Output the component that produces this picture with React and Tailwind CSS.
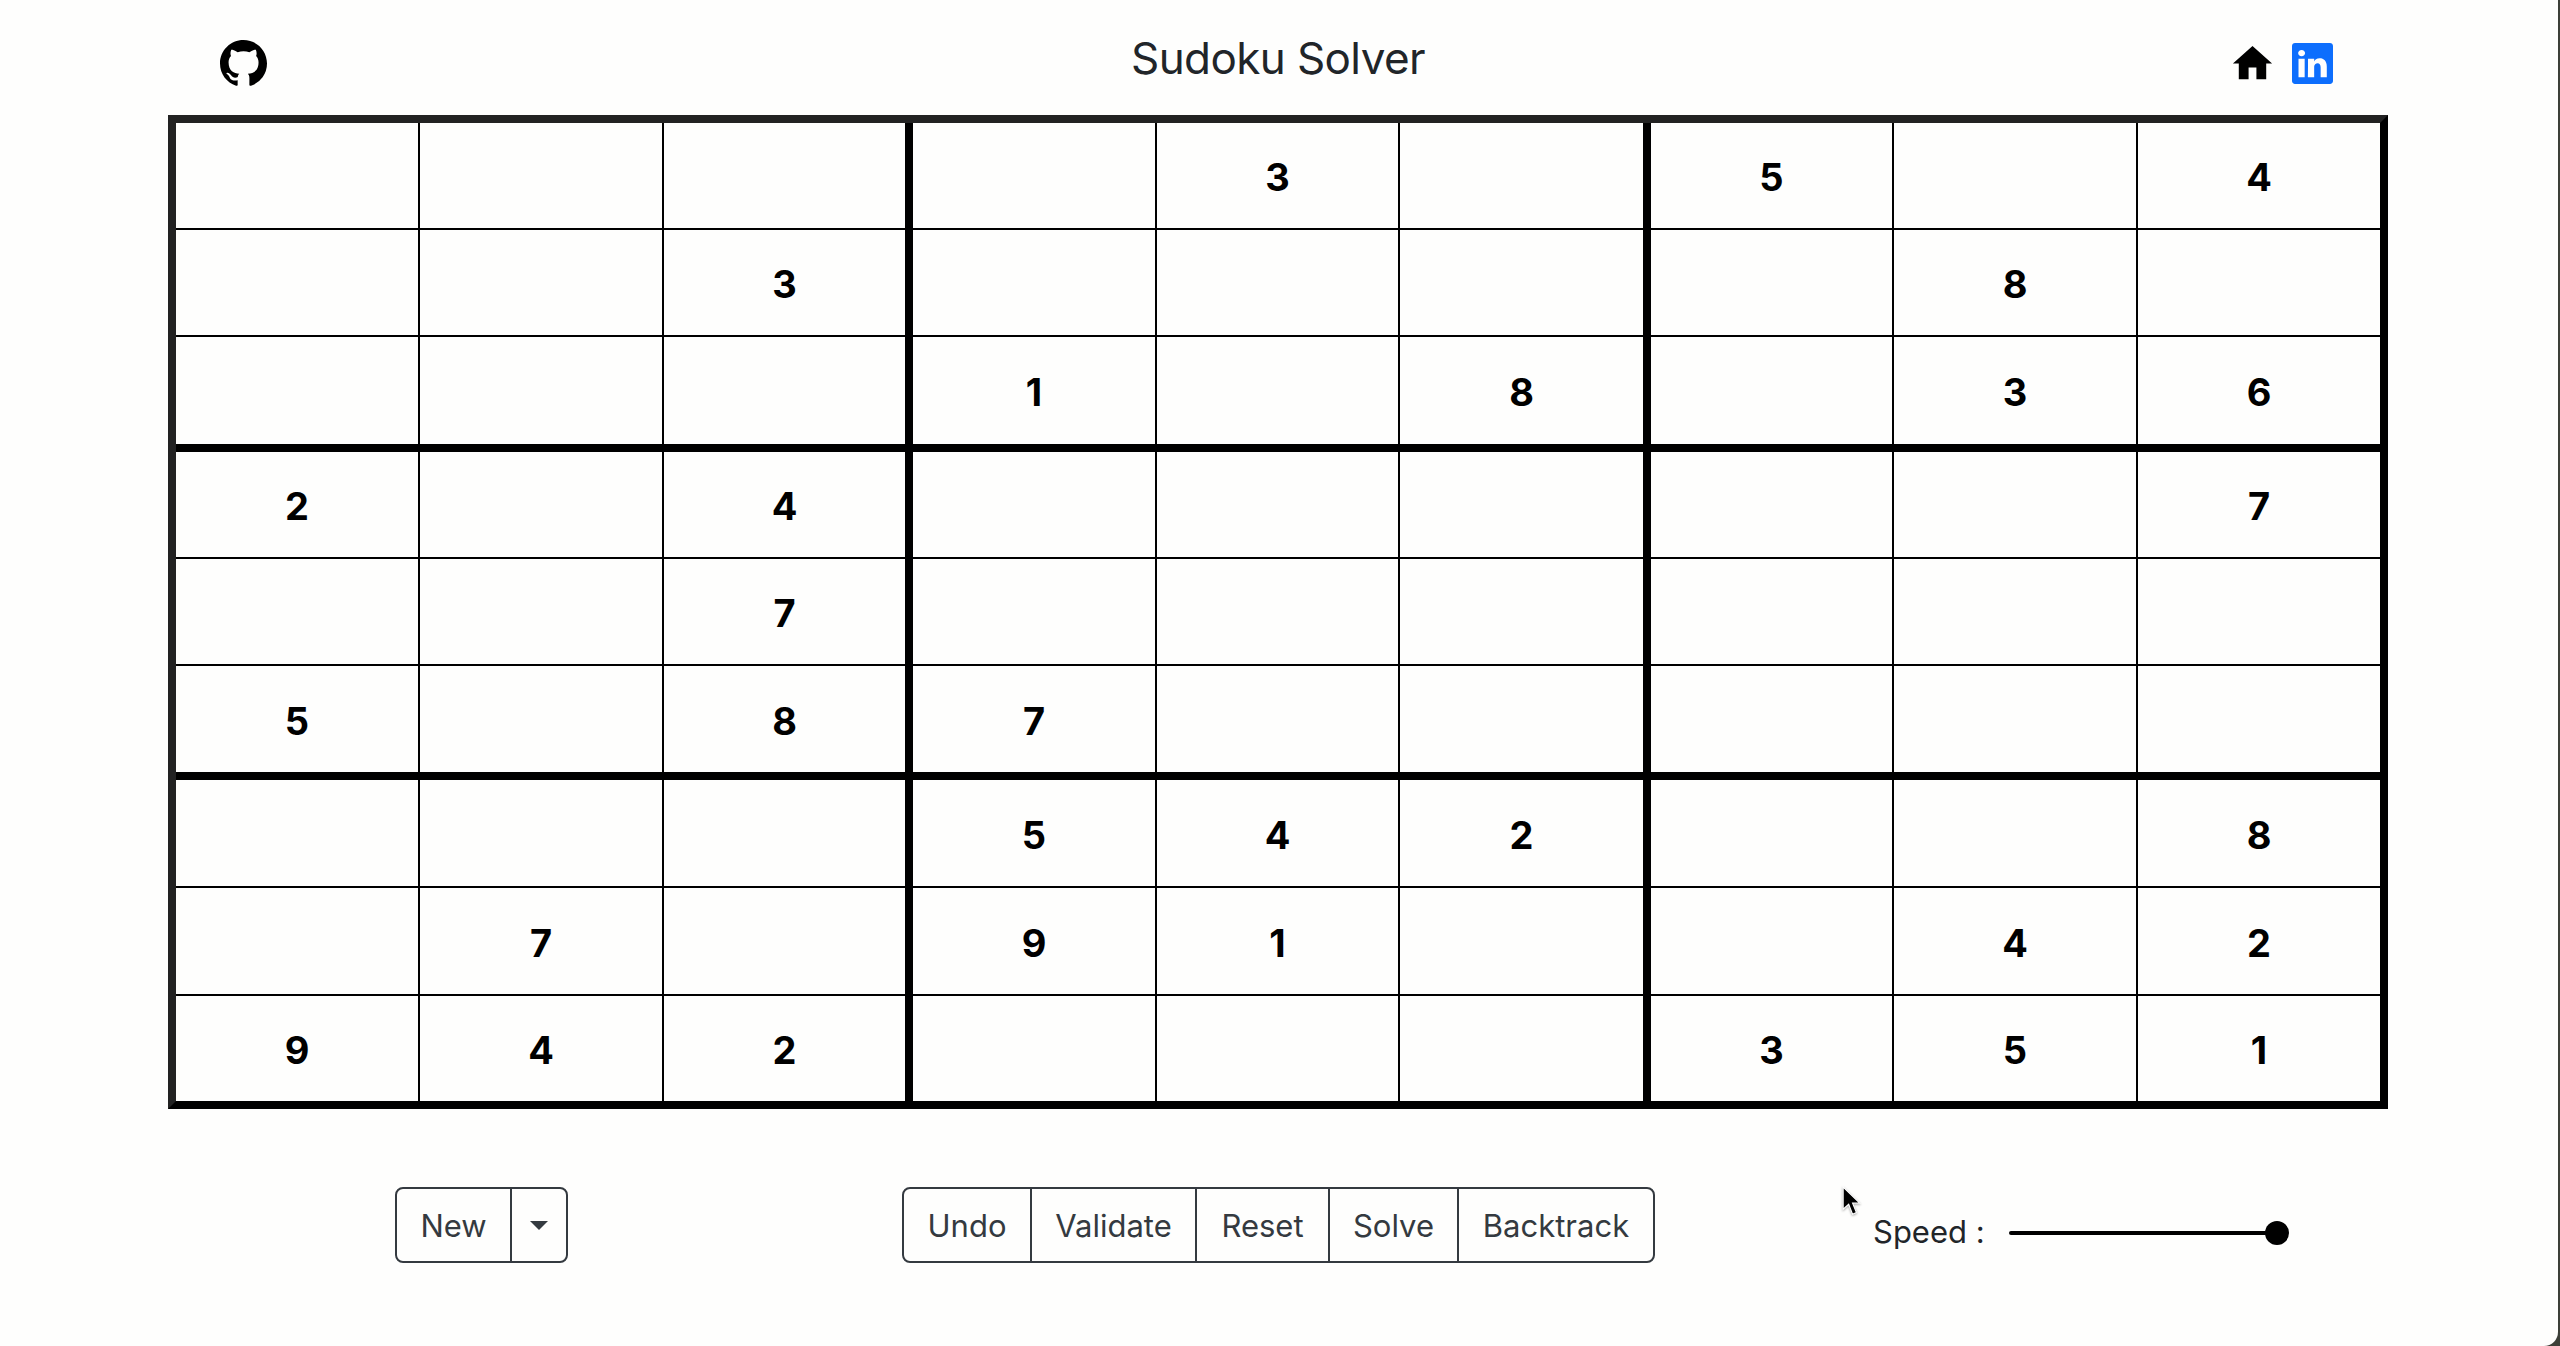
const board = [
  ['', '', '', '', '3', '', '5', '', '4'],
  ['', '', '3', '', '', '', '', '8', ''],
  ['', '', '', '1', '', '8', '', '3', '6'],
  ['2', '', '4', '', '', '', '', '', '7'],
  ['', '', '7', '', '', '', '', '', ''],
  ['5', '', '8', '7', '', '', '', '', ''],
  ['', '', '', '5', '4', '2', '', '', '8'],
  ['', '7', '', '9', '1', '', '', '4', '2'],
  ['9', '4', '2', '', '', '', '3', '5', '1'],
]

// thick lines after every third cell, none on the last one (table border covers it)
const colBorder = (c) => (c === 8 ? '' : c === 2 || c === 5 ? 'border-r-8' : 'border-r-2')
const rowBorder = (r) => (r === 8 ? '' : r === 2 || r === 5 ? 'border-b-8' : 'border-b-2')

const actions = [
  { label: 'Undo', width: 'w-[128px]' },
  { label: 'Validate', width: 'w-[165px]' },
  { label: 'Reset', width: 'w-[133px]' },
  { label: 'Solve', width: 'w-[129px]' },
  { label: 'Backtrack', width: 'w-[194px]' },
]

function GithubMark() {
  return (
    <svg viewBox="0 0 16 16" className="w-[47px] h-[47px]" fill="#000">
      <path d="M8 0C3.58 0 0 3.58 0 8c0 3.54 2.29 6.53 5.47 7.59.4.07.55-.17.55-.38 0-.19-.01-.82-.01-1.49-2.01.37-2.53-.49-2.69-.94-.09-.23-.48-.94-.82-1.13-.28-.15-.68-.52-.01-.53.63-.01 1.08.58 1.23.82.72 1.21 1.87.87 2.33.66.07-.52.28-.87.51-1.07-1.78-.2-3.64-.89-3.64-3.95 0-.87.31-1.59.82-2.15-.08-.2-.36-1.02.08-2.12 0 0 .67-.21 2.2.82.64-.18 1.32-.27 2-.27.68 0 1.36.09 2 .27 1.53-1.04 2.2-.82 2.2-.82.44 1.1.16 1.92.08 2.12.51.56.82 1.27.82 2.15 0 3.07-1.87 3.75-3.65 3.95.29.25.54.73.54 1.48 0 1.07-.01 1.93-.01 2.2 0 .21.15.46.55.38A8.013 8.013 0 0016 8c0-4.42-3.58-8-8-8z" />
    </svg>
  )
}

function HomeIcon() {
  return (
    <svg viewBox="0 0 24 24" className="w-[47px] h-[47px]" fill="#000">
      <path d="M10 20v-6h4v6h5v-8h3L12 3 2 12h3v8z" />
    </svg>
  )
}

function LinkedinIcon() {
  return (
    <svg viewBox="0 0 16 16" className="w-[41px] h-[41px]" fill="#0d6efd">
      <path d="M0 1.146C0 .513.526 0 1.175 0h13.65C15.474 0 16 .513 16 1.146v13.708c0 .633-.526 1.146-1.175 1.146H1.175C.526 16 0 15.487 0 14.854V1.146zm4.943 12.248V6.169H2.542v7.225h2.401zm-1.2-8.212c.837 0 1.358-.554 1.358-1.248-.015-.709-.52-1.248-1.342-1.248-.822 0-1.359.54-1.359 1.248 0 .694.521 1.248 1.327 1.248h.016zm4.908 8.212V9.359c0-.216.016-.432.08-.586.173-.431.568-.878 1.232-.878.869 0 1.216.662 1.216 1.634v3.865h2.401V9.25c0-2.22-1.184-3.252-2.764-3.252-1.274 0-1.845.7-2.165 1.193v.025h-.016a5.54 5.54 0 0 1 .016-.025V6.169h-2.4c.03.678 0 7.225 0 7.225h2.4z" />
    </svg>
  )
}

function Cursor() {
  return (
    <svg viewBox="0 0 18 28" className="absolute left-[1842px] top-[1186px] w-[20px] h-[31px] drop-shadow-[0_1px_1px_rgba(0,0,0,0.35)]">
      <path d="M1 1 L1 21 L6 16.5 L9.5 25.5 L13 24 L9.5 15.5 L16 15.5 Z" fill="#000" stroke="#fff" strokeWidth="1" />
    </svg>
  )
}

export default function App() {
  return (
    <div className="relative w-[2560px] h-[1346px] overflow-hidden bg-[#3c3f38] font-['Inter',sans-serif]">
      <div className="w-[2558px] h-[1346px] bg-[#fefefd] rounded-br-[14px]">
        <header className="w-[2556px] h-[115px] grid grid-cols-[1fr_auto_1fr] items-center">
          <div className="pl-[220px] pt-[11px]">
            <GithubMark />
          </div>
          <h1 className="text-[44px] leading-none tracking-[-0.6px] font-normal text-[#212529] mt-[1px]">Sudoku Solver</h1>
          <div className="flex items-center justify-end gap-4 pr-[223px] pt-[12px]">
            <HomeIcon />
            <LinkedinIcon />
          </div>
        </header>

        <div className="ml-[168px] w-[2220px] h-[994px] border-8 border-t-[#222222] border-l-[#222222] border-r-black border-b-black grid grid-cols-[244px_244px_249px_244px_243px_251px_243px_244px_242px] grid-rows-[107px_107px_115px_107px_107px_114px_108px_108px_105px]">
          {board.map((row, r) =>
            row.map((val, c) => (
              <div
                key={`${r}-${c}`}
                className={`flex items-center justify-center pt-1 border-black text-[38px] font-bold text-black ${colBorder(c)} ${rowBorder(r)}`}
              >
                {val}
              </div>
            ))
          )}
        </div>

        <div className="flex items-start mt-[78px] pl-[395px] text-[31px] leading-none">
          <div className="flex h-[76px] rounded-lg border-2 border-[#343a40] text-[#343a40]">
            <button className="w-[115px] border-r-2 border-[#343a40] flex items-center justify-center">New</button>
            <button className="w-[54px] flex items-center justify-center">
              <span className="w-0 h-0 border-x-[9px] border-t-[9px] border-x-transparent border-t-[#343a40]" />
            </button>
          </div>

          <div className="flex h-[76px] ml-[334px] rounded-lg border-2 border-[#343a40] text-[#343a40]">
            {actions.map((a, i) => (
              <button
                key={a.label}
                className={`${a.width} flex items-center justify-center ${i < actions.length - 1 ? 'border-r-2 border-[#343a40]' : ''}`}
              >
                {a.label}
              </button>
            ))}
          </div>

          <div className="flex items-center ml-[218px] mt-[28px] h-[36px] text-[#212529]">
            <span className="w-[136px] -mt-[3px]">Speed :</span>
            <div className="w-[258px] h-1 bg-black rounded-full" />
            <div className="w-6 h-6 rounded-full bg-black -ml-[2px]" />
          </div>
        </div>
      </div>

      <Cursor />
    </div>
  )
}
